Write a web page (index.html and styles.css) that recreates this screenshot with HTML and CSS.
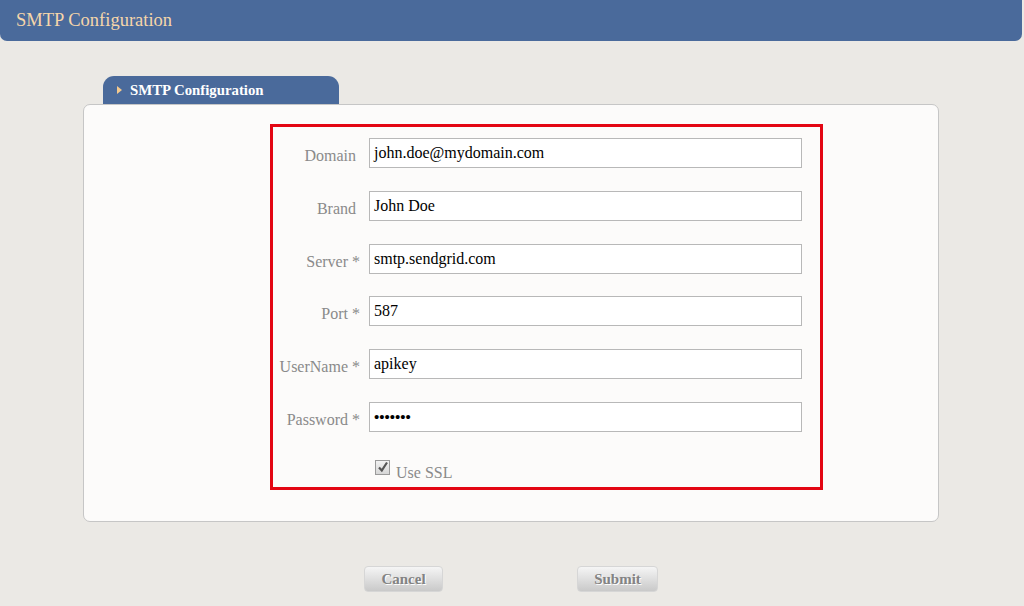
FILE: index.html
```html
<!DOCTYPE html>
<html>
<head>
<meta charset="utf-8">
<link rel="stylesheet" href="styles.css">
</head>
<body>
<div class="header">SMTP Configuration</div>
<div class="section">
  <div class="tab"><span class="arrow"></span>SMTP Configuration</div>
  <div class="panel">
    <div class="box">
      <label class="lbl opt">Domain</label>
      <div class="inp">john.doe@mydomain.com</div>
      <label class="lbl opt">Brand</label>
      <div class="inp">John Doe</div>
      <label class="lbl">Server *</label>
      <div class="inp">smtp.sendgrid.com</div>
      <label class="lbl">Port *</label>
      <div class="inp">587</div>
      <label class="lbl">UserName *</label>
      <div class="inp">apikey</div>
      <label class="lbl">Password *</label>
      <div class="inp pwd">&#8226;&#8226;&#8226;&#8226;&#8226;&#8226;&#8226;</div>
      <div class="empty"></div>
      <div class="check">
        <span class="cb"><svg width="12" height="12" viewBox="0 0 12 12"><path d="M2 6.5 L4.8 9.5 L10 1.5" fill="none" stroke="#555" stroke-width="2.2"/></svg></span>
        <span class="cblabel">Use SSL</span>
      </div>
    </div>
  </div>
</div>
<div class="buttons">
  <div class="btn cancel">Cancel</div>
  <div class="btn submit">Submit</div>
</div>
</body>
</html>
```
FILE: styles.css
```css
html, body {
  margin: 0;
  padding: 0;
  background: #ebe9e5;
  font-family: "Liberation Serif", "Times New Roman", serif;
}
.header {
  width: 1006px;
  height: 41px;
  background: #4a6a9b;
  border-radius: 0 0 7px 7px;
  color: #f6d6aa;
  font-size: 18.5px;
  line-height: 41px;
  padding-left: 16px;
  box-sizing: content-box;
}
.section {
  margin: 35px 0 0 83px;
  width: 856px;
}
.tab {
  margin-left: 20px;
  width: 236px;
  height: 28px;
  box-sizing: border-box;
  background: #4a6a9b;
  border-radius: 11px 11px 0 0;
  color: #ffffff;
  font-weight: bold;
  font-size: 14.8px;
  line-height: 29px;
  padding-left: 14px;
  display: flex;
  align-items: center;
}
.arrow {
  display: inline-block;
  width: 0;
  height: 0;
  border-top: 4px solid transparent;
  border-bottom: 4px solid transparent;
  border-left: 5px solid #f3c98e;
  margin-right: 8px;
}
.panel {
  background: #fcfbfa;
  border: 1px solid #c6c6c6;
  border-radius: 7px;
  height: 418px;
  box-sizing: border-box;
  padding: 19px 0 0 186px;
}
.box {
  width: 553px;
  height: 366px;
  box-sizing: border-box;
  border: 3px solid #e30613;
  padding: 11px 18px 0 0;
  display: grid;
  grid-template-columns: 87px 433px;
  column-gap: 9px;
  row-gap: 22.8px;
  grid-auto-rows: 30px;
}
.lbl {
  color: #8a8a8a;
  font-size: 16px;
  text-align: right;
  line-height: 35px;
}
.opt {
  padding-right: 4px;
}
.inp {
  background: #ffffff;
  border: 1px solid #b8b8b8;
  box-sizing: border-box;
  height: 30px;
  font-size: 16px;
  line-height: 28px;
  padding-left: 4px;
  color: #000;
}
.pwd {
  font-size: 15px;
  font-weight: bold;
}
.check {
  display: flex;
  align-items: flex-start;
  margin-top: 5px;
  padding-left: 6px;
}
.cb {
  width: 15px;
  height: 15px;
  box-sizing: border-box;
  border: 1px solid #9a9a9a;
  background: linear-gradient(#f2f2f2, #d6d6d6);
  display: flex;
  align-items: center;
  justify-content: center;
  margin-right: 6px;
}
.cblabel {
  color: #8a8a8a;
  font-size: 16px;
  line-height: 24px;
  margin-top: 1px;
}
.buttons {
  display: flex;
  margin: 44px 0 0 364px;
  gap: 134px;
}
.btn {
  height: 26px;
  box-sizing: border-box;
  border: 1px solid #d6d6d6;
  border-radius: 4px;
  background: linear-gradient(#f5f5f5, #c9c9c9);
  color: #838383;
  font-weight: bold;
  font-size: 15px;
  line-height: 24px;
  text-align: center;
  text-shadow: 1px 1px 0 #ffffff;
}
.cancel { width: 79px; }
.submit { width: 81px; }
```
